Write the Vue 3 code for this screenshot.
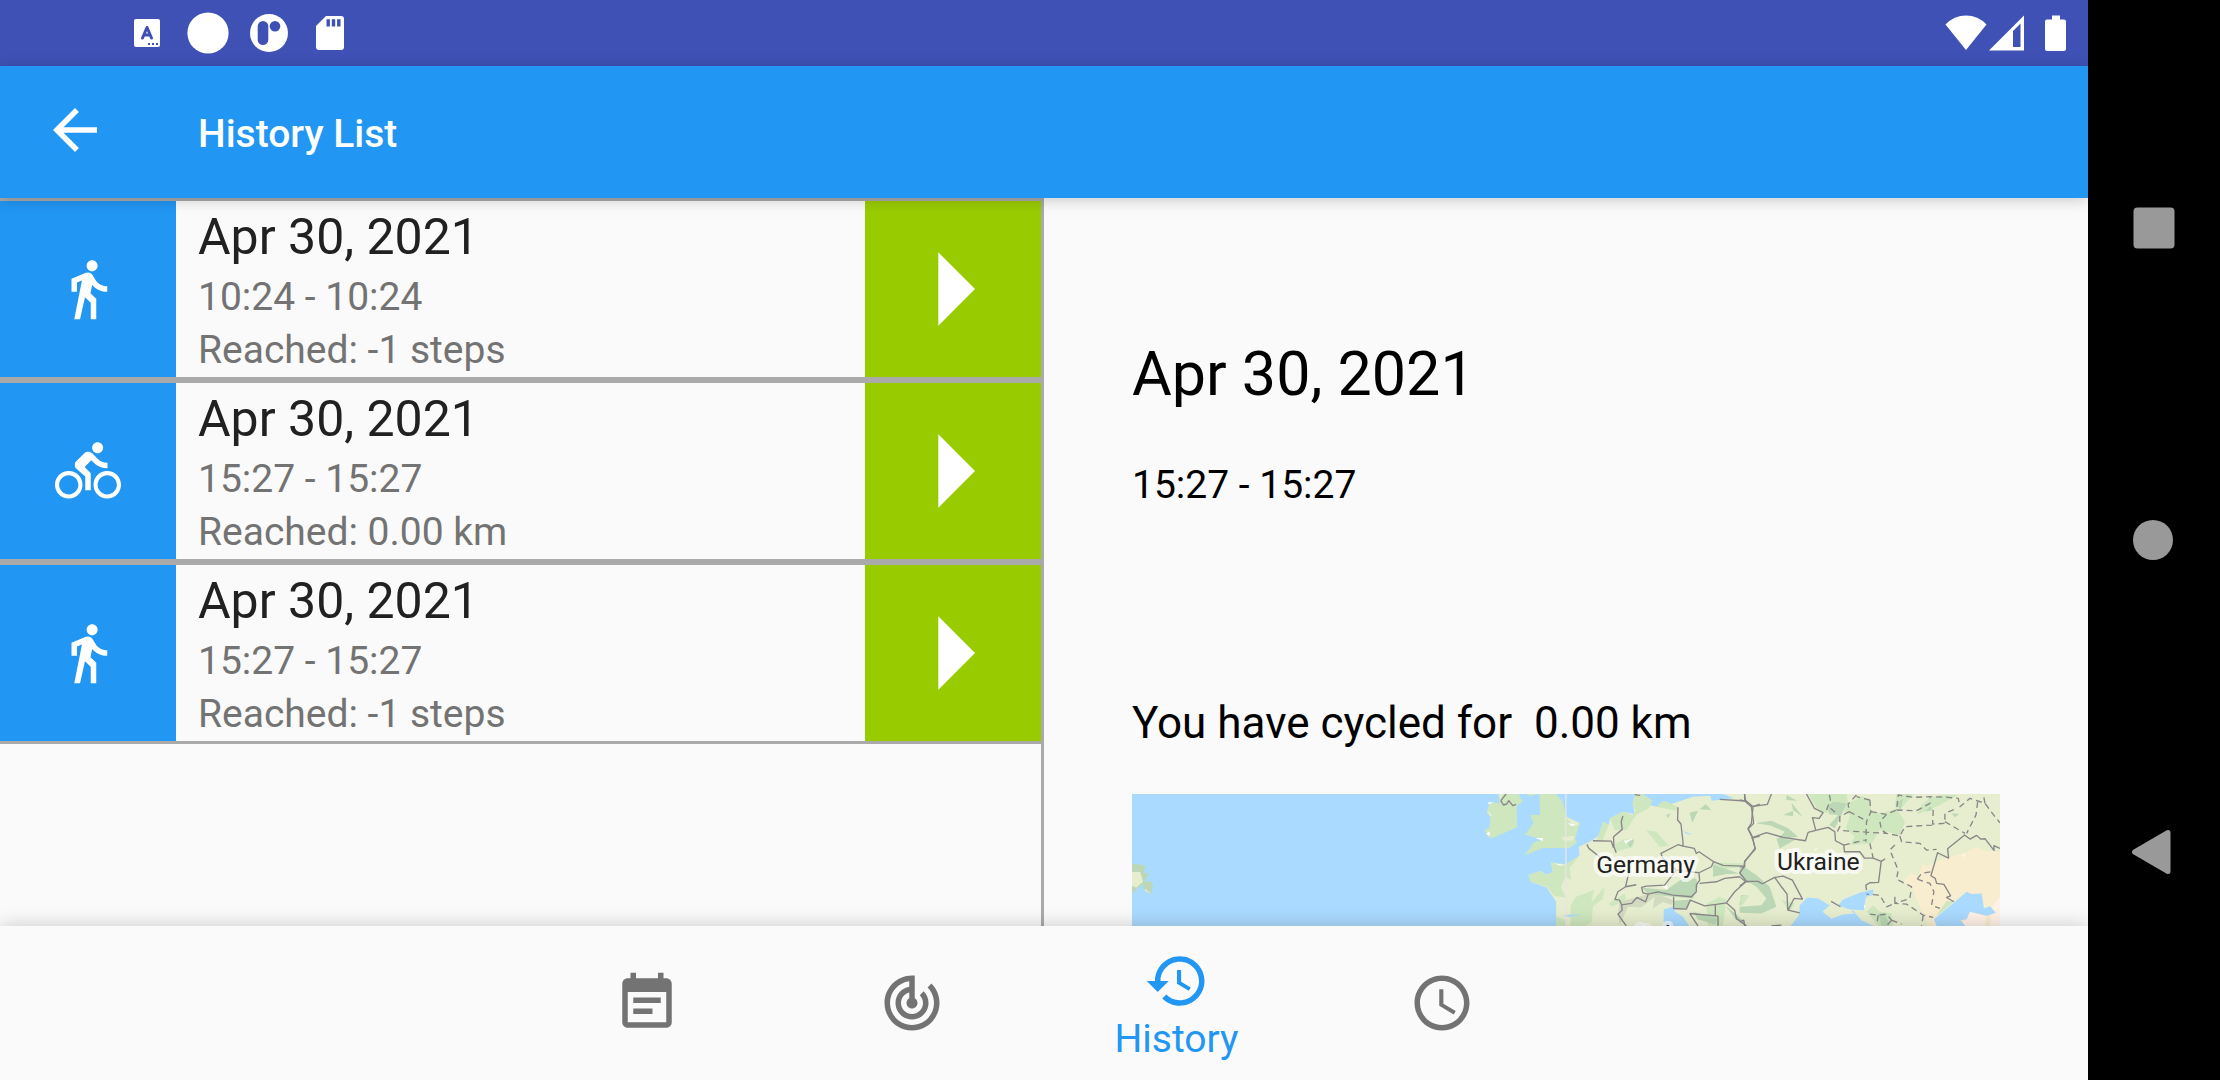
<script setup>
import { ref } from 'vue'

const WALK = 'M13.5 5.5c1.1 0 2-.9 2-2s-.9-2-2-2-2 .9-2 2 .9 2 2 2zM9.8 8.9L7 23h2.1l1.8-8 2.1 2v6h2v-7.5l-2.1-2 .6-3C14.8 12 16.8 13 19 13v-2c-1.9 0-3.5-1-4.3-2.4l-1-1.6c-.4-.6-1-1-1.7-1-.3 0-.5.1-.8.1L6 8.3V13h2V9.6l1.8-.7'
const BIKE = 'M15.5 5.5c1.1 0 2-.9 2-2s-.9-2-2-2-2 .9-2 2 .9 2 2 2zM5 12c-2.8 0-5 2.2-5 5s2.2 5 5 5 5-2.2 5-5-2.2-5-5-5zm0 8.5c-1.9 0-3.5-1.6-3.5-3.5s1.6-3.5 3.5-3.5 3.5 1.6 3.5 3.5-1.6 3.5-3.5 3.5zm5.8-10l2.4-2.4.8.8c1.3 1.3 3 2.1 5.1 2.1V9c-1.5 0-2.7-.6-3.6-1.5l-1.9-1.9c-.5-.4-1-.6-1.6-.6s-1.1.2-1.4.6L7.8 8.4c-.4.4-.6.9-.6 1.4 0 .6.2 1.1.6 1.4L11 14v5h2v-6.2l-2.2-2.3zM19 12c-2.8 0-5 2.2-5 5s2.2 5 5 5 5-2.2 5-5-2.2-5-5-5zm0 8.5c-1.9 0-3.5-1.6-3.5-3.5s1.6-3.5 3.5-3.5 3.5 1.6 3.5 3.5-1.6 3.5-3.5 3.5z'

const entries = [
  { id: 1, icon: WALK, date: 'Apr 30, 2021', time: '10:24 - 10:24', reached: 'Reached: -1 steps' },
  { id: 2, icon: BIKE, date: 'Apr 30, 2021', time: '15:27 - 15:27', reached: 'Reached: 0.00 km' },
  { id: 3, icon: WALK, date: 'Apr 30, 2021', time: '15:27 - 15:27', reached: 'Reached: -1 steps' },
]

const tabs = [
  { name: 'Schedule', icon: 'M17 10H7v2h10v-2zm2-7h-1V1h-2v2H8V1H6v2H5c-1.11 0-1.99.9-1.99 2L3 19c0 1.1.89 2 2 2h14c1.1 0 2-.9 2-2V5c0-1.1-.9-2-2-2zm0 16H5V8h14v11zm-5-5H7v2h7v-2z' },
  { name: 'Tracking', icon: 'M19.07 4.93l-1.41 1.41C19.1 7.79 20 9.79 20 12c0 4.42-3.58 8-8 8s-8-3.58-8-8c0-4.08 3.05-7.44 7-7.93v2.02C8.16 6.57 6 9.03 6 12c0 3.31 2.69 6 6 6s6-2.69 6-6c0-1.66-.67-3.16-1.76-4.24l-1.41 1.41C15.55 9.9 16 10.9 16 12c0 2.21-1.79 4-4 4s-4-1.79-4-4c0-1.86 1.28-3.41 3-3.86v2.14c-.6.35-1 .98-1 1.72 0 1.1.9 2 2 2s2-.9 2-2c0-.74-.4-1.38-1-1.72V2h-1C6.48 2 2 6.48 2 12s4.48 10 10 10 10-4.48 10-10c0-2.76-1.12-5.26-2.93-7.07z' },
  { name: 'History', icon: 'M13 3c-4.97 0-9 4.03-9 9H1l3.89 3.89.07.14L9 12H6c0-3.87 3.13-7 7-7s7 3.13 7 7-3.13 7-7 7c-1.93 0-3.68-.79-4.94-2.06l-1.42 1.42C8.27 19.99 10.51 21 13 21c4.97 0 9-4.03 9-9s-4.03-9-9-9zm-1 5v5l4.28 2.54.72-1.21-3.5-2.08V8H12z' },
  { name: 'Time', icon: 'M11.99 2C6.47 2 2 6.48 2 12s4.47 10 9.99 10C17.52 22 22 17.52 22 12S17.52 2 11.99 2zM12 20c-4.42 0-8-3.58-8-8s3.58-8 8-8 8 3.58 8 8-3.58 8-8 8zm.5-13H11v6l5.25 3.15.75-1.23-4.5-2.67z' },
]
const active = ref('History')
</script>

<template>
  <div class="device">
    <div class="app">
      <div class="status">
        <div class="notices">
          <span>
            <svg width="26" height="28" viewBox="0 0 26 28" aria-hidden="true">
              <rect width="26" height="28" rx="2" fill="#fff" />
              <path d="M8.500 19L13 8.500L17.500 19M10 16H16" fill="none" stroke="#3f51b5" stroke-width="3" stroke-linecap="round" stroke-linejoin="round" />
              <path d="M14 25h2m2 0h2m2 0h2" stroke="#3f51b5" stroke-width="2" />
            </svg>
          </span>
          <span>
            <svg width="42" height="42" viewBox="0 0 42 42" aria-hidden="true"><circle cx="21" cy="21" r="20.600" fill="#fff" /></svg>
          </span>
          <span>
            <svg width="38" height="38" viewBox="0 0 38 38" aria-hidden="true">
              <circle cx="19" cy="19" r="19" fill="#fff" />
              <rect x="7.700" y="7" width="10.600" height="24" rx="5.300" fill="#3f51b5" />
              <circle cx="25" cy="12.300" r="5.300" fill="#3f51b5" />
            </svg>
          </span>
          <span>
            <svg width="28" height="34" viewBox="0 0 28 34" aria-hidden="true">
              <path d="M10 0H25a3 3 0 0 1 3 3V31a3 3 0 0 1-3 3H3a3 3 0 0 1-3-3V10z" fill="#fff" />
              <path d="M12.200 3.300v7.200M17.500 3.300v7.200M22.800 3.300v7.200" stroke="#3f51b5" stroke-width="3.400" />
            </svg>
          </span>
        </div>
        <div class="signals">
          <svg width="42" height="36" viewBox="0 0 42 36" aria-hidden="true"><path d="M21 35L.500 9.500Q9 .500 21 .500T41.500 9.500z" fill="#fff" /></svg>
          <svg width="36" height="36" viewBox="0 0 36 36" aria-hidden="true"><path d="M0 35.500L35 .500V35.500zM24 16V32H31.500V8.500z" fill="#fff" fill-rule="evenodd" /></svg>
          <svg class="battery" width="22" height="36" viewBox="0 0 22 36" aria-hidden="true"><path d="M7 0.500h8v4h4a2 2 0 0 1 2 2V34a2 2 0 0 1-2 2H2a2 2 0 0 1-2-2V6.500a2 2 0 0 1 2-2h5z" fill="#fff" /></svg>
        </div>
      </div>

      <header class="toolbar">
        <button class="back" type="button" aria-label="Back">
          <svg class="icon" viewBox="0 0 24 24"><path d="M20 11H7.830l5.590-5.590L12 4l-8 8 8 8 1.410-1.410L7.830 13H20v-2z" /></svg>
        </button>
        <h1>History List</h1>
      </header>

      <main class="content">
        <ul class="list">
          <li v-for="entry in entries" :key="entry.id" class="row">
            <div class="kind"><svg class="icon" viewBox="0 0 24 24" aria-hidden="true"><path :d="entry.icon" /></svg></div>
            <div class="info">
              <p class="date">{{ entry.date }}</p>
              <p>{{ entry.time }}</p>
              <p>{{ entry.reached }}</p>
            </div>
            <button class="open" type="button" aria-label="Show details">
              <svg viewBox="0 0 176 176"><path d="M73.300 51.300L110 88L73.300 124.700z" /></svg>
            </button>
          </li>
        </ul>

        <section class="detail">
          <h2>Apr 30, 2021</h2>
          <p class="span">15:27 - 15:27</p>
          <p class="result">You have cycled for&nbsp; 0.00 km</p>
          <svg class="map" viewBox="0 0 2601 540" role="img" aria-label="Map of Europe">
            <rect width="2601" height="540" fill="#aadaff" />
            <!-- Newfoundland -->
            <g transform="translate(-39 -42)">
              <path class="wood" d="M39 250L80 256L74 278L90 280L76 305L96 303L102 320L96 342L75 330L70 312L39 340z" />
              <path class="land" d="M39 276H64L72 305L52 322L39 318zM78 325L96 341L78 332z" />
            </g>
            <g transform="translate(981 -42)">
              <!-- Ireland and Great Britain -->
              <path class="green" d="M90 68L120 70L118 42H178L189 65L172 78L173 142L100 174L84 170L75 150L90 145L93 110L82 98zM198 42L215 48L235 42zM240 42H288L310 65L320 110L361 130L347 175L352 188L330 204H250L196 226L222 187L248 178L197 164L222 130L213 105H242z" />
              <path class="land" d="M320 110L361 130L344 140zM306 171L346 168L340 181H312zM82 88L98 106L92 110zM118 42H130L124 60z" />
              <path class="snow" d="M228 174H250V183zM86 67H103L88 73zM80 160L91 154V168zM325 130L347 133L337 139z" />
              <!-- continental Europe -->
              <path class="land" d="M290 582V365L262 322L215 306L207 285L243 273L260 284L280 276L275 247L318 253L360 226L358 200L395 183L425 160L430 125L447 135L452 114L490 95L525 102L520 70L525 42H548L578 62L568 75L592 80L612 62L635 72L700 50L752 47L756 62L822 55L790 42H1620V582z" />
              <path class="green" d="M207 285L243 273L260 284L280 276L275 247L318 253L360 226L350 240L330 262L335 300L318 290L304 320L318 352L285 348L262 320L215 306zM430 125L447 135L430 180L412 178zM452 114L490 95L520 105L528 90L518 72L527 42H548L578 62L568 85L530 105L500 150L465 150zM590 80L612 62L655 80L650 92zM333 375L350 350L404 330L395 368L435 320L430 355L400 380L397 425L380 437H333zM290 408L318 420V437H290zM560 150L590 155L628 197L600 200L580 175zM445 372L495 340L500 358L458 380zM490 178L525 176L520 200L468 215L462 195zM740 372L780 350L800 360L790 437H745zM760 248L850 250L840 262L775 268zM420 282L440 255L470 265L445 285z" />
              <path class="wood" d="M620 105L633 100L625 115zM690 98L715 92L698 128zM720 88L738 73L755 90zM498 181L524 180L512 204zM545 322L620 330L668 296L710 295L715 318L700 355L642 350L602 346L566 342zM760 253L795 265L838 280L800 282L760 290zM850 257L900 295V320L875 290zM642 362L695 358L680 387H644zM700 395L775 415L765 432L715 418zM845 345L868 348L838 378zM798 377L850 420H830z" />
              <path class="rock" d="M480 365L566 342L605 346L640 360L638 375L610 365L580 385L585 350L545 382L505 380L480 435L476 395z" />
              <path class="snow" d="M608 320L622 314L625 328zM493 182L520 176L498 192zM285 250L318 255L300 256z" />
              <path class="water" d="M612 388L640 380L646 395L670 410L688 437L760 582H690L612 437zM672 153L700 165L678 160zM318 404L366 403L335 410L310 408z" />
              <path class="border" d="M124 62L132 75L142 72L148 62L160 77L170 73M124 62L140 42M490 108L485 125L488 148L462 170L463 200L470 218M400 182L455 183L462 203M382 193L388 205L420 230M655 82L654 120L664 132L670 185V198L655 194L604 220L610 235L650 270L615 315L560 318L546 322L550 338L566 342L595 335L640 345L695 350L710 335V315L720 300L718 278L755 260L762 245L718 215L710 220L704 205L670 198M650 270L718 278M566 342L558 365L532 352L516 370L486 374L480 360L466 358L475 335L498 320L510 268M498 320L530 314M486 374L488 390L475 402L500 437M642 350V385L680 387L692 360L735 377L770 373L800 368L825 335L858 305L840 290L795 295L770 305L720 310M762 245L790 256L850 258L845 290M780 58L860 63L880 80L875 130L865 145L878 170L886 205L855 245V262M854 42L858 63M880 80L900 72M858 305H900M690 400L775 408V437M767 373V408M690 400L715 437M800 368L825 390L830 415L860 437M875 175L900 168M525 44L542 46" />
              <path class="tile" d="M319 42V437" />
            </g>
            <!-- Eastern Europe, Black Sea and the Caspian -->
            <g transform="translate(1821 -42)">
              <path class="green" d="M205 42H320L325 70L370 48L390 65L395 95L430 100L470 85L495 125L480 165L420 150L395 190L330 195L345 170L318 145L330 105L290 75L260 100L235 90zM470 42H520L480 90L465 80zM545 75L570 55L600 45L655 45L600 75L530 105zM380 395L400 375L420 395L455 400L460 437H415zM125 360L165 370L150 395zM0 350L30 345L5 380z" />
              <path class="wood" d="M140 45L172 62L140 60zM155 68L190 112L160 90zM130 105L160 92V108zM45 130L95 122L145 145L175 170L110 180L135 155L90 136zM110 175L165 180L120 205zM0 255L50 285L90 320L110 380L65 400L0 398V380L65 375L80 355L50 320L0 290zM262 80L280 65L320 70L305 105L285 145L268 135L295 105L268 103zM470 70L490 55L482 90zM555 95L570 80L580 90zM635 100L658 102L645 112zM415 400L435 400L450 437H425z" />
              <path class="sand" d="M490 303L515 278L535 290L550 247L560 260L600 240L680 215L710 200L735 212L780 215V582H530L565 437L540 380L520 330z" />
              <path class="dry" d="M662 437L690 395L740 407L735 437L750 437L757 380L780 350V582H662z" />
              <path class="green" d="M590 405L620 362L642 365L600 400z" />
              <path class="water" d="M100 582L153 437L178 405L180 375L203 352L235 355L270 375L248 395L275 416L340 392L365 420L400 437L430 582zM295 376L310 358L360 338L400 328L400 345L378 350L372 390L330 388zM582 417L645 365L680 335L695 342L725 340L732 384L750 378L768 398L740 407L690 395L680 417L662 420L675 437L700 582H650z" />
              <path class="land" d="M270 400L330 390L345 400L300 404L275 415z" />
              <path class="snow" d="M43 124L53 130L46 132zM223 208L233 204L228 211zM665 228L675 222L672 230zM372 374L378 380L374 384z" />
              <path class="border" d="M0 60L15 63L35 80L83 73L95 42M15 42V63M35 80L42 130L25 147L38 173L47 207L15 243L12 262L0 278L20 303L0 318M38 173L80 158L130 172L197 182L205 157L228 151L218 113L238 115L250 98L224 85L200 42M228 151L265 142L285 155L287 182L312 195L314 215L360 215L374 234H400L424 244L416 307L390 308L378 315L380 330M20 303L55 304L68 311L105 292L130 288L158 300L188 357L163 355L145 390L180 398M105 292L125 320L142 342L144 390M12 262L0 258M0 425L12 420L15 437M274 364L302 380M642 365L620 352L632 347L612 313L590 310L586 295L573 287L593 218L626 234L623 206L674 165L690 177L710 166L722 177L735 176L762 211V197L780 205M95 437L125 435" />
              <path class="border dashed" d="M350 45L325 72L328 95L300 110V140L290 160M390 60L350 50M390 60L393 95L380 125L378 185M328 95L375 120M393 95L440 103L470 90L475 45L520 52L575 50L625 52L655 55L660 80L690 55L735 70L765 110L780 128M735 70L730 42M470 90L530 92L570 70V50M440 103L420 125L425 150L440 160L480 168L495 140L580 135M310 152L390 157L440 160M713 66L708 105L680 160M580 90L578 132L615 130V100L650 85M615 125L675 160M480 168L485 185L540 190L560 210L590 208M465 195L450 210L475 270L470 297L515 320L510 355L465 370L500 372L550 405L580 412M465 350V370L440 380L420 345L380 342M532 297L545 280L575 275M532 297L570 310L582 335L575 375L600 385M550 405L545 437M390 402L415 405L440 402L455 420M415 405L412 425M455 420L440 437M455 420L485 432M390 190L400 234M312 195L375 180M424 244L436 236M260 90L272 60L268 42M272 85L295 105" />
            </g>
            <text class="label" x="1391" y="236">Germany</text>
            <text class="label" x="1933" y="227">Ukraine</text>
            <text class="label" x="1512" y="446">Italy</text>
          </svg>
        </section>
      </main>

      <nav class="tabs">
        <button v-for="tab in tabs" :key="tab.name" type="button" :class="{ active: tab.name === active }" :aria-label="tab.name" @click="active = tab.name">
          <svg class="icon" viewBox="0 0 24 24" aria-hidden="true"><path :d="tab.icon" /></svg>
          <span v-if="tab.name === active">{{ tab.name }}</span>
        </button>
      </nav>
    </div>

    <div class="system">
      <button type="button" aria-label="Recent apps"><svg viewBox="0 0 66 66"><rect x="12.500" y="12.500" width="41" height="41" rx="4" /></svg></button>
      <button type="button" aria-label="Home"><svg viewBox="0 0 66 66"><circle cx="32" cy="33" r="20" /></svg></button>
      <button type="button" aria-label="Back"><svg viewBox="0 0 66 66"><path d="M13.500 33L47 13.500V52.500z" stroke="#999" stroke-width="5" stroke-linejoin="round" /></svg></button>
    </div>
  </div>
</template>

<style>
body {
  margin: 0;
}
</style>

<style scoped>
.device {
  display: flex;
  height: 100vh;
  overflow: hidden;
  background: #fafafa;
  font-family: Roboto, "Liberation Sans", sans-serif;
  font-size: 39px;
}
h1, h2, p, ul {
  margin: 0;
  padding: 0;
  font-weight: 400;
}
button {
  margin: 0;
  padding: 0;
  border: 0;
  background: none;
  font: inherit;
  color: inherit;
  cursor: pointer;
}
svg {
  display: block;
}
.icon {
  width: 66px;
  height: 66px;
  fill: currentColor;
}
.app {
  flex: 1;
  min-width: 0;
  display: flex;
  flex-direction: column;
}
.status {
  flex: none;
  height: 66px;
  display: flex;
  align-items: center;
  justify-content: space-between;
  padding: 0 21px 0 116px;
  background: #3f51b5;
}
.notices,
.signals {
  display: flex;
  align-items: center;
}
.notices span {
  width: 61px;
  display: flex;
  justify-content: center;
}
.signals {
  gap: 2px;
}
.battery {
  margin-left: 18px;
}
.toolbar {
  flex: none;
  position: relative;
  z-index: 2;
  height: 132px;
  display: flex;
  align-items: center;
  gap: 90px;
  padding-left: 42px;
  box-sizing: border-box;
  background: #2196f3;
  color: #fff;
  box-shadow: 0 2px 14px rgba(0, 0, 0, 0.2);
}
.back {
  padding-bottom: 4px;
}
.toolbar h1 {
  padding-top: 4px;
  font-size: 39px;
  font-weight: 500;
}
.content {
  flex: 1;
  min-height: 0;
  display: grid;
  grid-template-columns: 1fr 1fr;
}
.list {
  list-style: none;
  border-right: 3px solid #aaa;
}
.row {
  display: flex;
  height: 176px;
  border: solid #aaa;
  border-width: 3px 0;
}
.kind,
.open {
  flex: none;
  width: 176px;
  display: flex;
  align-items: center;
  justify-content: center;
}
.kind {
  background: #2196f3;
  color: #fff;
}
.open {
  background: #9c0;
  fill: #fff;
}
.open svg {
  width: 100%;
}
.info {
  flex: 1;
  padding: 2px 0 0 22px;
  align-self: center;
  line-height: 53px;
  color: #737373;
}
.date {
  font-size: 50px;
  line-height: 68px;
  color: #212121;
}
.detail {
  min-width: 0;
  overflow: hidden;
  padding: 140px 88px 0;
  color: #000;
}
.detail h2 {
  margin-bottom: 52px;
  font-size: 61px;
  line-height: 72px;
}
.span {
  margin-bottom: 189px;
  line-height: 46px;
}
.result {
  margin-bottom: 45px;
  font-size: 44px;
  line-height: 52px;
}
.map {
  width: 100%;
}
.land {
  fill: #e7eecf;
}
.green {
  fill: #cee7be;
}
.wood {
  fill: #bbd7b5;
}
.rock {
  fill: #d2dbc0;
}
.sand {
  fill: #f8edcf;
}
.dry {
  fill: #fff1e6;
}
.snow {
  fill: #fff;
}
.water {
  fill: #aadaff;
}
.border {
  fill: none;
  stroke: #898588;
  stroke-width: 4px;
  stroke-linejoin: round;
}
.dashed {
  stroke-dasharray: 18 12;
}
.tile {
  stroke: #e8e6e1;
  stroke-width: 4px;
}
.label {
  font-size: 74px;
  fill: #222;
  stroke: rgba(255, 255, 255, 0.7);
  stroke-width: 24px;
  stroke-linejoin: round;
  paint-order: stroke;
}
.tabs {
  flex: none;
  position: relative;
  z-index: 2;
  height: 154px;
  display: flex;
  justify-content: center;
  background: #fafafa;
  color: #737373;
  box-shadow: 0 0 18px rgba(0, 0, 0, 0.2);
}
.tabs button {
  width: 265px;
  display: flex;
  flex-direction: column;
  align-items: center;
  justify-content: center;
  line-height: 50px;
}
.tabs .active {
  padding-top: 6px;
  color: #2196f3;
}
.system {
  flex: none;
  position: relative;
  z-index: 3;
  width: 132px;
  display: flex;
  flex-direction: column;
  align-items: center;
  justify-content: center;
  gap: 246px;
  background: #000;
  fill: #999;
}
.system svg {
  width: 66px;
  height: 66px;
}
</style>
